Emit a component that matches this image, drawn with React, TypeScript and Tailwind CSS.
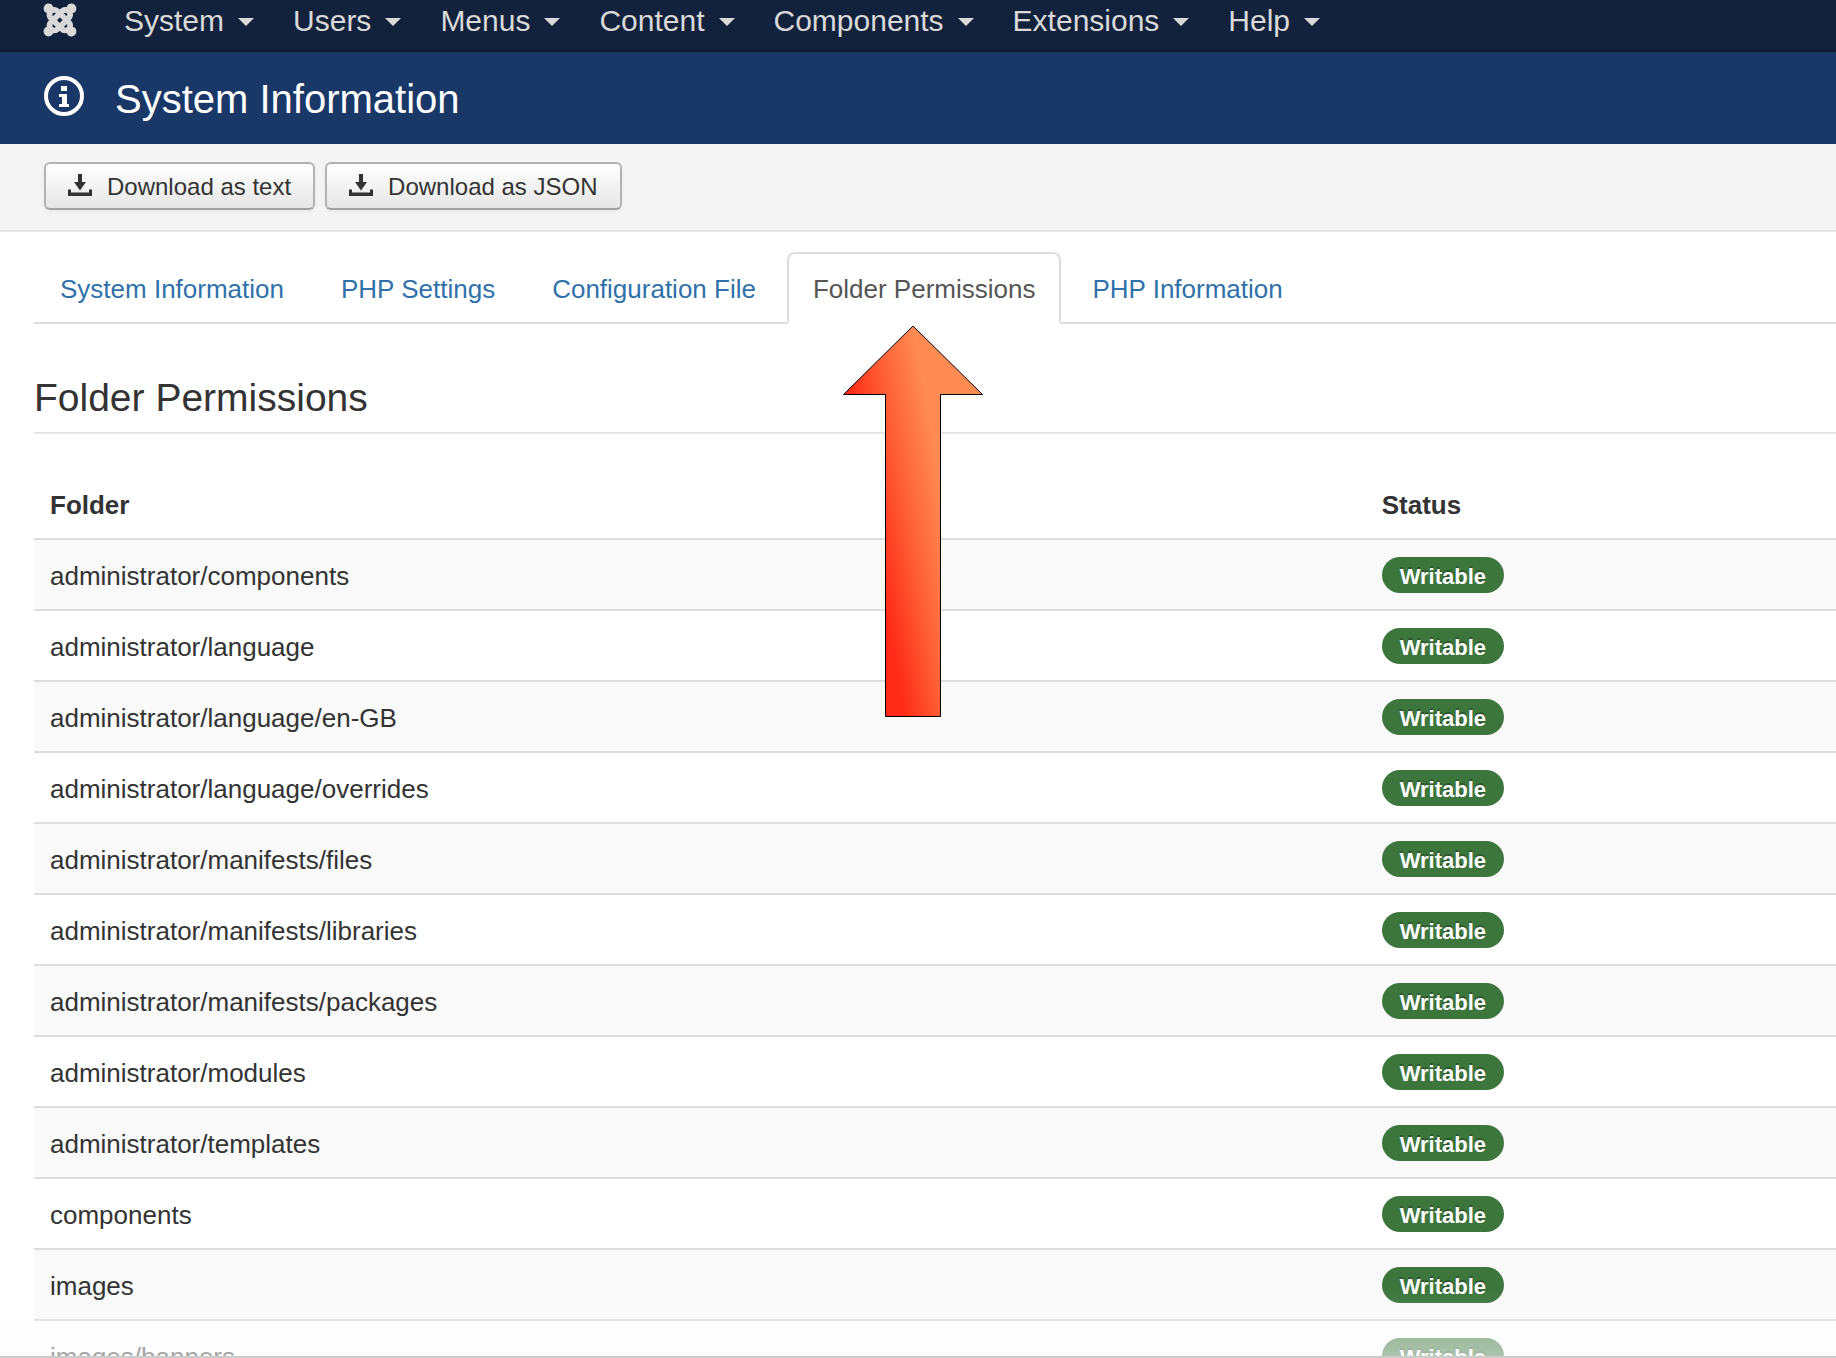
// Joomla back-end: System Information, Folder Permissions tab
import { FaJoomla } from 'react-icons/fa';

const MENU = ['System', 'Users', 'Menus', 'Content', 'Components', 'Extensions', 'Help'];

const TABS = [
  { id: 'site', title: 'System Information' },
  { id: 'phpsettings', title: 'PHP Settings' },
  { id: 'config', title: 'Configuration File' },
  { id: 'directory', title: 'Folder Permissions', active: true },
  { id: 'phpinfo', title: 'PHP Information' },
];

const FOLDERS = [
  'administrator/components',
  'administrator/language',
  'administrator/language/en-GB',
  'administrator/language/overrides',
  'administrator/manifests/files',
  'administrator/manifests/libraries',
  'administrator/manifests/packages',
  'administrator/modules',
  'administrator/templates',
  'components',
  'images',
  'images/banners',
];

export default function App() {
  return (
    <div className="relative flex h-screen flex-col overflow-hidden bg-white font-['Helvetica_Neue','Liberation_Sans',Arial,sans-serif] text-[26px] leading-9 text-[#333]">
      <Navbar />

      <header className="flex h-[92px] shrink-0 items-center gap-[31px] bg-[#1a3867] px-11 text-white">
        <InfoIcon />
        <h1 className="pt-0.5 text-[40px] leading-none">System Information</h1>
      </header>

      <div className="flex shrink-0 gap-2.5 border-b-2 border-[#e3e3e3] bg-[#f4f4f4] px-11 pt-[18px] pb-5">
        <ToolbarButton label="Download as text" />
        <ToolbarButton label="Download as JSON" />
      </div>

      <main className="min-h-0 flex-1 pt-5 pl-[34px]">
        <Tabs />
        <h2 className="mt-[52px] border-b-2 border-[#e5e5e5] pb-3 text-[39px] leading-[44px]">Folder Permissions</h2>
        <FolderTable />
      </main>

      {/* Fade above the status bar */}
      <div className="pointer-events-none absolute inset-x-0 bottom-0 h-[68px] border-b-2 border-[#ccc] bg-[linear-gradient(to_bottom,rgba(255,255,255,0)_0%,rgba(255,255,255,0.05)_20%,rgba(255,255,255,0.2)_43%,rgba(252,252,252,0.5)_68%,rgba(250,250,250,0.58)_100%)]" />
    </div>
  );
}

function Navbar() {
  return (
    <nav className="flex h-[52px] shrink-0 items-start border-b-2 border-[#0d1a2e] bg-[#12223d] px-[42px] text-[30px] leading-[42px] text-[#d9d9d9]">
      <a href="#home" aria-label="Joomla" className="mt-0.5 mr-[46px]">
        <FaJoomla className="h-9 w-9 overflow-visible stroke-current stroke-[18]" />
      </a>
      <ul className="flex gap-[39px]">
        {MENU.map((item) => (
          <li key={item}>
            <a href={`#${item.toLowerCase()}`} className="flex items-center gap-3.5">
              {item}
              <span className="mt-0.5 border-x-8 border-t-8 border-x-transparent border-t-[#d9d9d9]" />
            </a>
          </li>
        ))}
      </ul>
    </nav>
  );
}

function ToolbarButton({ label }: { label: string }) {
  return (
    <button
      type="button"
      className="flex h-12 items-center gap-[15px] rounded-md border-2 border-[#b3b3b3] border-b-[#a2a2a2] bg-linear-to-b from-white to-[#e6e6e6] px-[22px] pt-0.5 text-2xl shadow-[0_2px_4px_rgba(0,0,0,0.05)]"
    >
      <DownloadIcon />
      {label}
    </button>
  );
}

function Tabs() {
  return (
    <ul className="flex h-[72px] border-b-2 border-[#ddd]">
      {TABS.map((tab) => (
        <li key={tab.id} className="relative mr-[5px] h-[72px]">
          <a
            href={`#${tab.id}`}
            className={`flex h-full items-center rounded-t-lg border-2 px-6 pt-0.5 ${
              tab.active ? 'border-[#ddd] border-b-white bg-white text-[#555]' : 'border-transparent text-[#3071a9]'
            }`}
          >
            {tab.title}
          </a>
          {tab.active && <Arrow />}
        </li>
      ))}
    </ul>
  );
}

function FolderTable() {
  return (
    <table className="mt-[37px] w-full table-fixed text-left">
      <thead>
        <tr className="h-[68px]">
          <th className="w-[73.9%] px-4 font-bold">Folder</th>
          <th className="px-4 font-bold">Status</th>
        </tr>
      </thead>
      <tbody>
        {FOLDERS.map((folder) => (
          <tr key={folder} className="h-[71px] border-t-2 border-[#ddd] odd:bg-[#f9f9f9]">
            <td className="px-4 pt-0.5">{folder}</td>
            <td className="px-4">
              <span className="block h-9 w-fit rounded-full bg-[#3c763d] px-[18px] pt-0.5 text-[22px] font-bold text-white text-shadow-[0_-2px_0_rgba(0,0,0,0.25)]">
                Writable
              </span>
            </td>
          </tr>
        ))}
      </tbody>
    </table>
  );
}

function InfoIcon() {
  return (
    <svg viewBox="0 0 40 40" className="mb-1 h-10 w-10" fill="currentColor" aria-hidden="true">
      <circle cx="20" cy="20" r="18" fill="none" stroke="currentColor" strokeWidth="4" />
      <path d="M17 10h6v5h-6zM15 18h8v10h2v3H15v-3h3v-7h-3z" />
    </svg>
  );
}

function DownloadIcon() {
  return (
    <svg viewBox="0 0 24 22" className="mb-1 h-[22px] w-6" fill="currentColor" aria-hidden="true">
      <path d="M10 0h4v8h4l-6 8.500L6 8h4zM0 15.500h3V18.500h18v-3h3V22H0z" />
    </svg>
  );
}

// Pointer to the open tab
function Arrow() {
  return (
    <svg viewBox="0 0 140 392" className="absolute top-[73px] left-14 z-10 h-[392px] w-[140px]" aria-hidden="true">
      <defs>
        <linearGradient id="arrow-fill" gradientUnits="userSpaceOnUse" x1="5" y1="69" x2="80" y2="56">
          <stop offset="0" stopColor="#ff2a18" />
          <stop offset="0.5" stopColor="#ff6035" />
          <stop offset="1" stopColor="#ff8a52" />
        </linearGradient>
      </defs>
      <path d="M70 1 139.500 69.500H97.500V391.500H42.500V69.500H.5Z" fill="url(#arrow-fill)" stroke="#000" />
    </svg>
  );
}
